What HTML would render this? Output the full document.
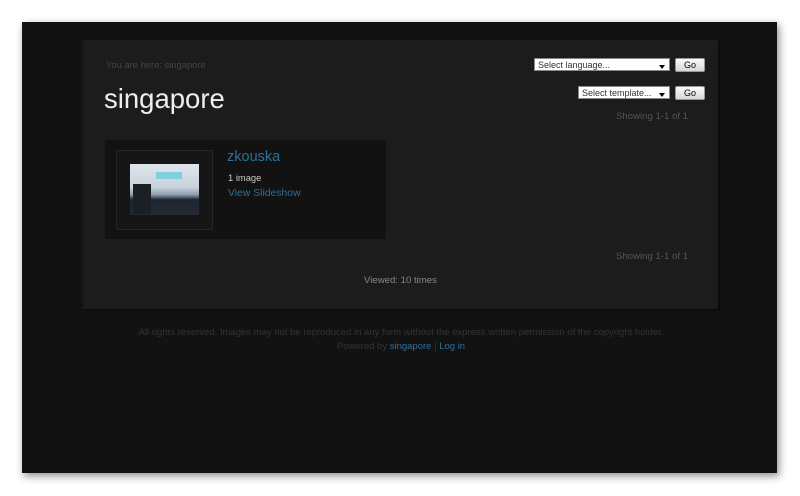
<!DOCTYPE html>
<html><head><style>
body{margin:0;width:800px;height:496px;background:#fff;font-family:"Liberation Sans",sans-serif;position:relative;overflow:hidden}
.win{position:absolute;left:22px;top:22px;width:755px;height:451px;background:#121212;box-shadow:2px 3px 8px rgba(0,0,0,.45)}
.panel{position:absolute;left:83px;top:40px;width:635px;height:269px;background:#1c1c1c;box-shadow:1px 1px 0 #0a0a0a,2px 2px 0 #0d0d0d}
.t{position:absolute;white-space:nowrap}
.sel{position:absolute;height:13px;background:#fff;border:1px solid #888;font-size:9px;color:#333;line-height:13px;padding-left:3px;box-sizing:border-box}
.sel:after{content:"";position:absolute;right:4px;top:6px;border:3px solid transparent;border-top:4px solid #000}
.btn{position:absolute;height:14px;width:30px;background:linear-gradient(#fafafa,#d8d8d8);border:1px solid #999;border-radius:2px;font-size:9px;text-align:center;line-height:13px;color:#000;box-sizing:border-box}
</style></head><body>
<div class="win"></div>
<div class="panel"></div>
<div class="t" style="left:106px;top:59px;font-size:9.4px;color:#444">You are here: singapore</div>
<div class="t" style="left:104px;top:83px;font-size:27.5px;color:#eee">singapore</div>
<div class="sel" style="left:534px;top:58px;width:136px">Select language...</div>
<div class="btn" style="left:675px;top:58px">Go</div>
<div class="sel" style="left:578px;top:86px;width:92px">Select template...</div>
<div class="btn" style="left:675px;top:86px">Go</div>
<div class="t" style="left:616px;top:111px;font-size:9.6px;color:#555">Showing 1-1 of 1</div>
<div style="position:absolute;left:105px;top:140px;width:281px;height:99px;background:#121212"></div>
<div style="position:absolute;left:116px;top:150px;width:97px;height:80px;border:1px solid #262626;box-sizing:border-box;background:#161616"></div>
<div style="position:absolute;left:130px;top:164px;width:69px;height:51px;background:linear-gradient(180deg,#dfe6ec 0%,#c9d3dc 45%,#8f9fb0 60%,#1d2530 70%,#252a32 100%)"></div>
<div style="position:absolute;left:133px;top:184px;width:18px;height:30px;background:#1a2024"></div>
<div style="position:absolute;left:156px;top:172px;width:26px;height:7px;background:#7fd0dc"></div>
<div class="t" style="left:227px;top:149px;font-size:14.5px;color:#2f6f9a">zkouska</div>
<div class="t" style="left:228px;top:172px;font-size:9.4px;color:#ccc">1 image</div>
<div class="t" style="left:228px;top:188px;font-size:10.4px;color:#2f6f9a">View Slideshow</div>
<div class="t" style="left:616px;top:251px;font-size:9.6px;color:#555">Showing 1-1 of 1</div>
<div class="t" style="left:364px;top:275px;font-size:9.6px;color:#888">Viewed: 10 times</div>
<div class="t" style="left:0;width:802px;text-align:center;top:327px;font-size:9.5px;color:#333">All rights reserved. Images may not be reproduced in any form without the express written permission of the copyright holder.</div>
<div class="t" style="left:0;width:802px;text-align:center;top:341px;font-size:9.5px;color:#333">Powered by <span style="color:#2f6f9a">singapore</span> | <span style="color:#2f6f9a">Log in</span></div>
</body></html>
